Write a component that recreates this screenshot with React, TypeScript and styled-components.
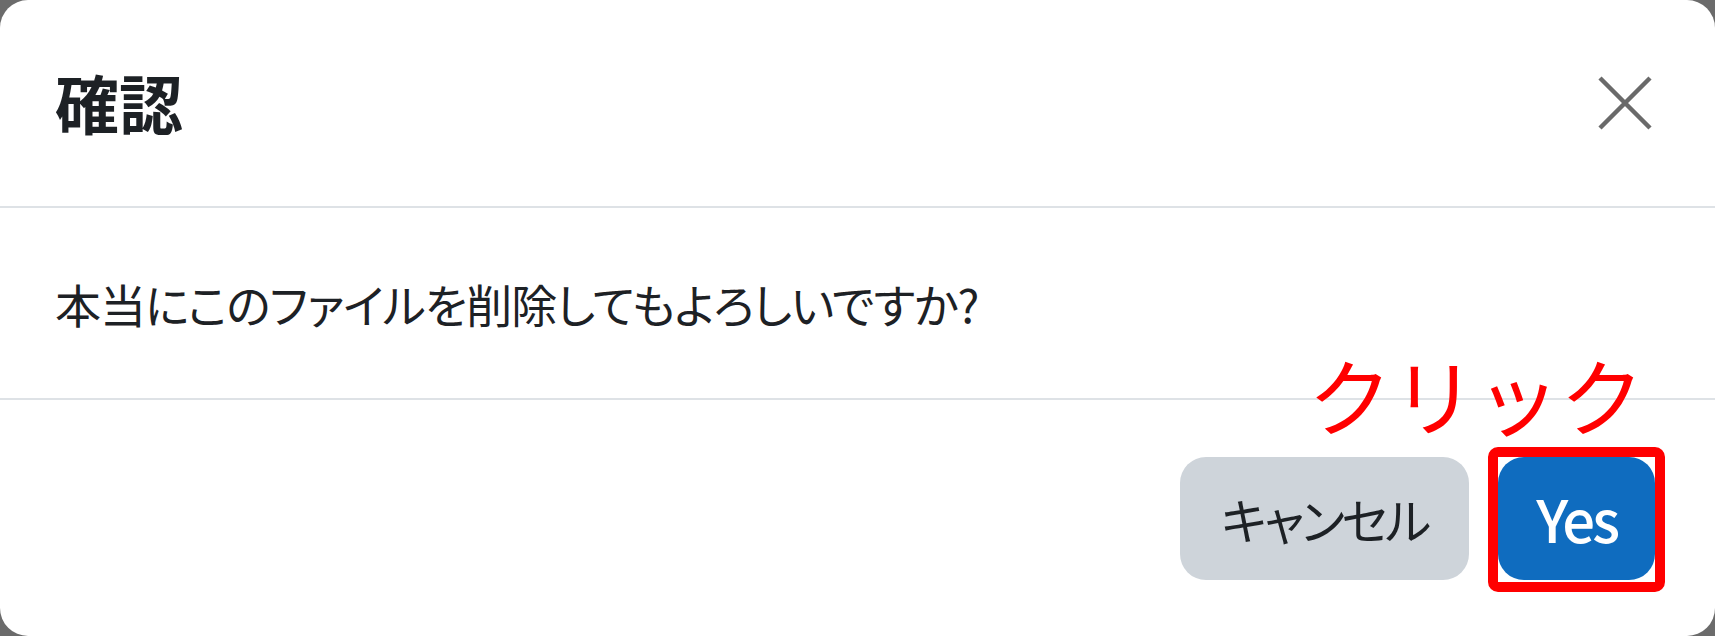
import React from "react"
import styled, { createGlobalStyle } from "styled-components"

const GlobalStyle = createGlobalStyle`
  html, body {
    margin: 0;
    padding: 0;
    background: #6b6b6b;
  }
  body {
    font-family: "Noto Sans CJK JP", "Noto Sans", sans-serif;
    color: #1d2125;
  }
`

const Dialog = styled.div`
  width: 1715px;
  height: 636px;
  background: #ffffff;
  border-radius: 28px;
  display: flex;
  flex-direction: column;
`

const Header = styled.div`
  height: 206px;
  border-bottom: 2px solid #dee2e6;
  display: flex;
  align-items: center;
  justify-content: space-between;
  padding: 0 62px 0 55px;
`

const Title = styled.h5`
  margin: 0 0 4px;
  font-size: 64px;
  line-height: 1;
  font-weight: 700;
  color: #1d2125;
`

const CloseButton = styled.button`
  border: 0;
  background: transparent;
  padding: 0;
  width: 56px;
  height: 56px;
  display: flex;
  align-items: center;
  justify-content: center;
  color: #6a6a6a;
  cursor: pointer;
`

const Body = styled.div`
  height: 190px;
  border-bottom: 2px solid #dee2e6;
  display: flex;
  align-items: center;
  padding: 0 55px;
`

const Message = styled.p`
  margin: 0;
  font-size: 46px;
  line-height: 1;
  letter-spacing: -1px;
  font-feature-settings: "palt";
  color: #1d2125;
`

const Footer = styled.div`
  flex: 1;
  display: flex;
  align-items: center;
  justify-content: flex-end;
  gap: 29px;
  padding: 0 60px 0 0;
`

const Button = styled.button<{ $primary?: boolean }>`
  height: 123px;
  border: 0;
  border-radius: 26px;
  padding: 0 ${p => (p.$primary ? "38px" : "41px")};
  background: ${p => (p.$primary ? "#0f6cbf" : "#ced4da")};
  color: ${p => (p.$primary ? "#ffffff" : "#1d2125")};
  font-family: "Noto Sans CJK JP", "Noto Sans", sans-serif;
  font-size: ${p => (p.$primary ? "58px" : "49px")};
  font-weight: ${p => (p.$primary ? 500 : 400)};
  letter-spacing: -3px;
  font-feature-settings: "palt";
  line-height: 1;
  cursor: pointer;
`

// red callout drawn around the confirm button
const Highlight = styled.div`
  position: relative;
  display: flex;

  &::after {
    content: "";
    position: absolute;
    inset: -10px -10px -12px -10px;
    border: 10px solid #ff0000;
    border-radius: 10px;
    pointer-events: none;
  }
`

const Callout = styled.span`
  position: absolute;
  top: -105px;
  right: 11px;
  font-size: 84px;
  line-height: 1;
  font-weight: 400;
  color: #ff0000;
  white-space: nowrap;
`

const CloseIcon = () => (
  <svg width="54" height="54" viewBox="0 0 54 54" fill="none">
    <path d="M2 2 L52 52 M52 2 L2 52" stroke="currentColor" strokeWidth="4.5" />
  </svg>
)

const App: React.FC = () => (
  <>
    <GlobalStyle />
    <Dialog>
      <Header>
        <Title>確認</Title>
        <CloseButton aria-label="閉じる">
          <CloseIcon />
        </CloseButton>
      </Header>
      <Body>
        <Message>本当にこのファイルを削除してもよろしいですか?</Message>
      </Body>
      <Footer>
        <Button>キャンセル</Button>
        <Highlight>
          <Callout>クリック</Callout>
          <Button $primary>Yes</Button>
        </Highlight>
      </Footer>
    </Dialog>
  </>
)

export default App
